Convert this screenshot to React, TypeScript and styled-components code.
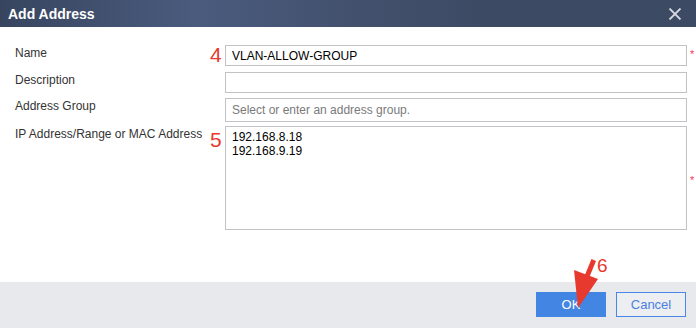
import React from "react";
import styled, { createGlobalStyle } from "styled-components";

const Global = createGlobalStyle`
  html, body { margin: 0; padding: 0; background: #ffffff; }
  body { font-family: "Liberation Sans", Arial, sans-serif; }
  * { box-sizing: border-box; }
`;

const Dialog = styled.div`
  position: relative;
  width: 696px;
  height: 328px;
  display: flex;
  flex-direction: column;
  background: #ffffff;
  overflow: hidden;
`;

const Header = styled.div`
  height: 27px;
  flex: none;
  display: flex;
  align-items: center;
  justify-content: space-between;
  padding: 0 14px 0 8px;
  background: linear-gradient(90deg, #37455f 0%, #4a5b7d 28%, #43516e 50%, #3d4a64 70%, #3d4a64 100%);
`;

const Title = styled.div`
  color: #ffffff;
  font-size: 14px;
  font-weight: bold;
  line-height: 16px;
`;

const Close = styled.button`
  width: 14px;
  height: 14px;
  padding: 0;
  border: 0;
  background: transparent;
  display: flex;
  align-items: center;
  justify-content: center;
  cursor: pointer;
`;

const Body = styled.div`
  flex: 1;
  display: flex;
  flex-direction: column;
  padding-top: 18px;
`;

const Row = styled.div<{ $gap: number; $h: number }>`
  display: flex;
  align-items: flex-start;
  margin-top: ${(p) => p.$gap}px;
  height: ${(p) => p.$h}px;
`;

const Label = styled.div`
  flex: none;
  width: 210px;
  padding-left: 15px;
  padding-top: 1px;
  font-size: 12px;
  line-height: 14px;
  color: #333333;
  white-space: nowrap;
`;

const Marker = styled.div<{ $top: number }>`
  flex: none;
  width: 15px;
  font-size: 21px;
  line-height: 21px;
  color: #e8392e;
  margin-top: ${(p) => p.$top}px;
  font-family: "Liberation Sans", Arial, sans-serif;
`;

const Field = styled.input`
  flex: none;
  width: 462px;
  height: 100%;
  border: 1px solid #c2c2c6;
  padding: 0 6px;
  font-family: "Liberation Sans", Arial, sans-serif;
  font-size: 12px;
  color: #000000;
  background: #ffffff;
  outline: none;
  &::placeholder { color: #7a7a7a; }
`;

const Area = styled.textarea`
  flex: none;
  width: 462px;
  height: 100%;
  border: 1px solid #c2c2c6;
  padding: 3px 6px;
  font-family: "Liberation Sans", Arial, sans-serif;
  font-size: 12px;
  line-height: 14px;
  color: #000000;
  background: #ffffff;
  resize: none;
  outline: none;
`;

const Required = styled.div<{ $top: number }>`
  margin-left: 3px;
  margin-top: ${(p) => p.$top}px;
  font-size: 11px;
  line-height: 10px;
  color: #ff3355;
`;

const Footer = styled.div`
  height: 46px;
  flex: none;
  background: #e8e9ed;
  display: flex;
  justify-content: flex-end;
  align-items: flex-start;
  gap: 10px;
  padding: 10px 10px 0 0;
`;

const Button = styled.button<{ $primary?: boolean }>`
  width: 70px;
  height: 25px;
  font-family: "Liberation Sans", Arial, sans-serif;
  font-size: 13px;
  border: 1px solid ${(p) => (p.$primary ? "#4285e2" : "#4a86e6")};
  background: ${(p) => (p.$primary ? "#4285e2" : "#eceef2")};
  color: ${(p) => (p.$primary ? "#ffffff" : "#4a80e0")};
  padding: 0;
  cursor: pointer;
`;

const Note = styled.div`
  position: absolute;
  left: 597px;
  top: 256px;
  font-size: 19px;
  line-height: 20px;
  color: #e8392e;
`;

const Arrow = styled.svg`
  position: absolute;
  left: 0;
  top: 0;
  pointer-events: none;
`;

export default function App() {
  return (
    <>
      <Global />
      <Dialog>
        <Header>
          <Title>Add Address</Title>
          <Close aria-label="close">
            <svg width="14" height="12" viewBox="0 0 14 12">
              <path d="M1.5 0.5 L12.5 11.5 M12.5 0.5 L1.5 11.5" stroke="#d4d8e0" strokeWidth="1.8" />
            </svg>
          </Close>
        </Header>
        <Body>
          <Row $gap={0} $h={21}>
            <Label>Name</Label>
            <Marker $top={-1}>4</Marker>
            <Field defaultValue="VLAN-ALLOW-GROUP" />
            <Required $top={4}>*</Required>
          </Row>
          <Row $gap={6} $h={21}>
            <Label>Description</Label>
            <Marker $top={0}></Marker>
            <Field />
          </Row>
          <Row $gap={5} $h={24}>
            <Label>Address Group</Label>
            <Marker $top={0}></Marker>
            <Field placeholder="Select or enter an address group." />
          </Row>
          <Row $gap={4} $h={104}>
            <Label>IP Address/Range or MAC Address</Label>
            <Marker $top={3}>5</Marker>
            <Area defaultValue={"192.168.8.18\n192.168.9.19"} />
            <Required $top={49}>*</Required>
          </Row>
        </Body>
        <Footer>
          <Button $primary>OK</Button>
          <Button>Cancel</Button>
        </Footer>
        <Note>6</Note>
        <Arrow width="696" height="328" viewBox="0 0 696 328">
          <polygon points="591.5,259 596,261 589,278 584.5,276" fill="#e8392e" />
          <polygon points="574,270 598,279 578,308" fill="#e8392e" />
        </Arrow>
      </Dialog>
    </>
  );
}
